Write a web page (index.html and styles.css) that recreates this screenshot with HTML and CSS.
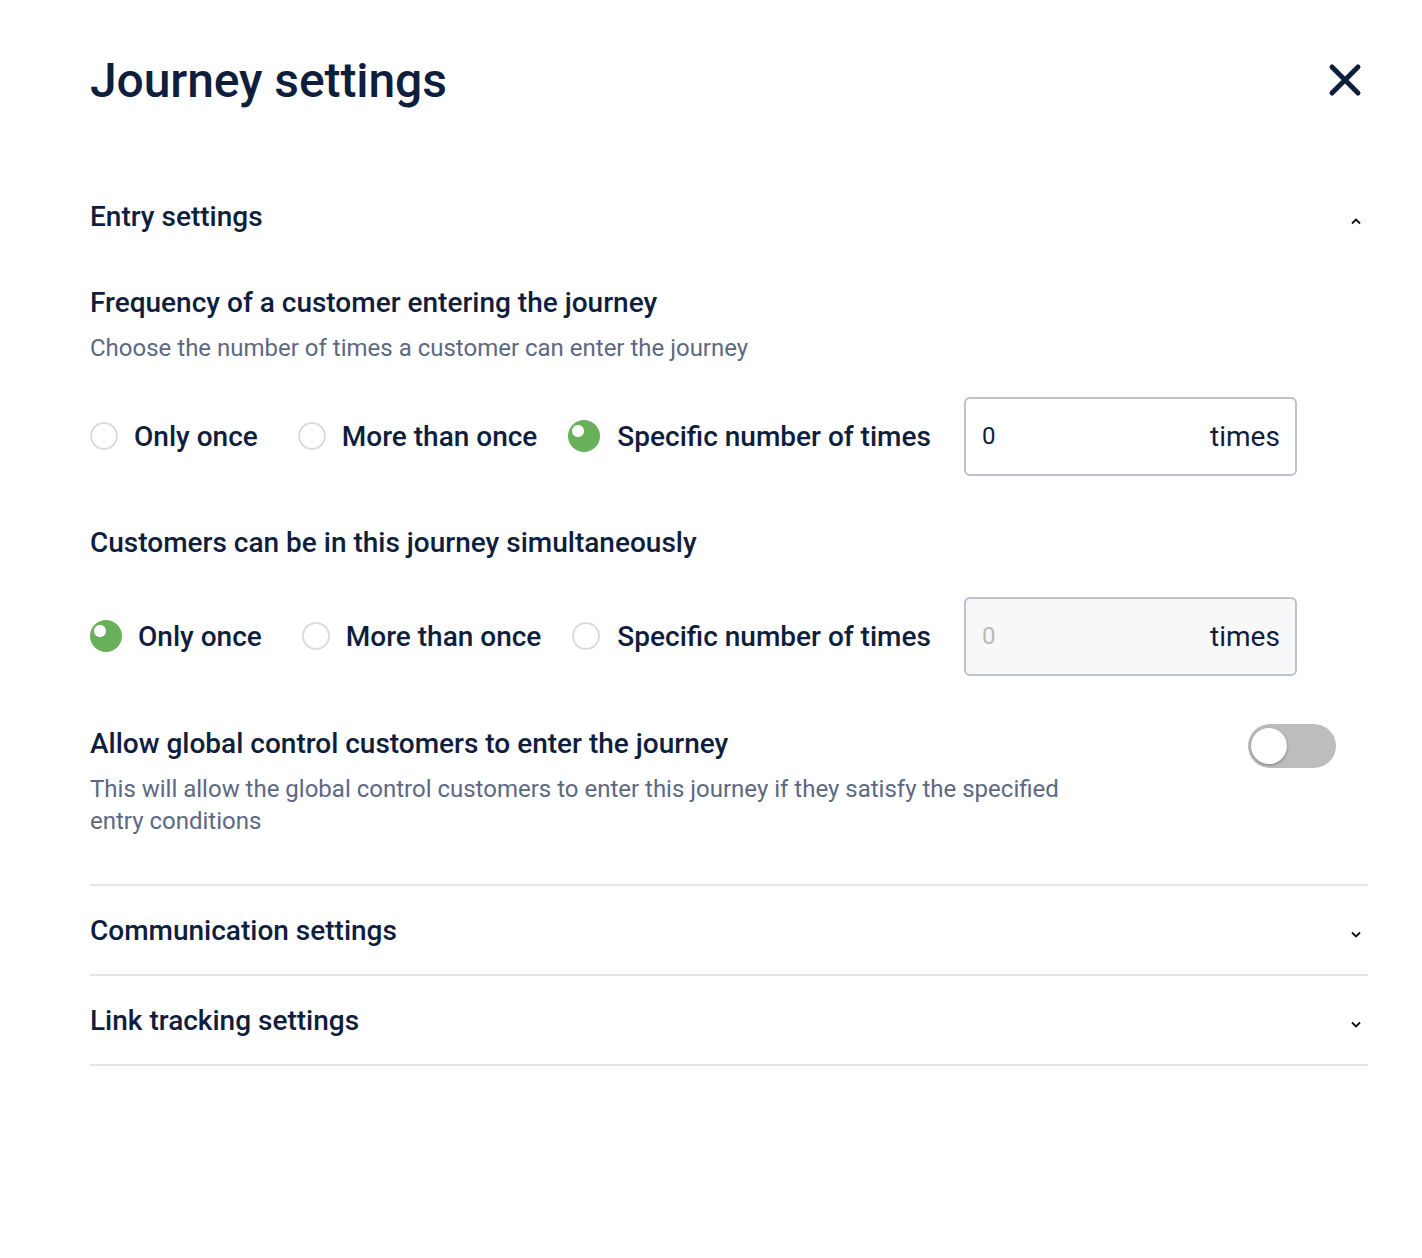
FILE: index.html
```html
<!DOCTYPE html>
<html lang="en">
<head>
  <meta charset="UTF-8" />
  <meta name="viewport" content="width=device-width, initial-scale=1.0"/>
  <title>Journey settings</title>
  <link rel="stylesheet" href="styles.css">
</head>
<body>

  <div class="panel">
    <header class="panel-head">
      <h1>Journey settings</h1>
      <button class="close-btn" aria-label="Close">
        <svg width="34" height="34" viewBox="0 0 34 34"><path d="M4 4 L30 30 M30 4 L4 30" stroke="#0f1e3d" stroke-width="5" stroke-linecap="round"/></svg>
      </button>
    </header>

    <section class="acc open">
      <div class="acc-head">
        <h2>Entry settings</h2>
        <svg class="chev" width="12" height="8" viewBox="0 0 12 8"><path d="M2 6.5 L6 2.5 L10 6.5" fill="none" stroke="#111" stroke-width="1.8"/></svg>
      </div>

      <h3 class="q q-first">Frequency of a customer entering the journey</h3>
      <p class="hint">Choose the number of times a customer can enter the journey</p>

      <div class="options">
        <label class="opt"><span class="radio"></span>Only once</label>
        <label class="opt"><span class="radio"></span>More than once</label>
        <label class="opt"><span class="radio on"></span>Specific number of times</label>
        <div class="count">
          <span class="num">0</span>
          <span class="unit">times</span>
        </div>
      </div>

      <h3 class="q q-second">Customers can be in this journey simultaneously</h3>

      <div class="options options-2">
        <label class="opt"><span class="radio on"></span>Only once</label>
        <label class="opt"><span class="radio"></span>More than once</label>
        <label class="opt"><span class="radio"></span>Specific number of times</label>
        <div class="count disabled">
          <span class="num">0</span>
          <span class="unit">times</span>
        </div>
      </div>

      <div class="toggle-row">
        <div>
          <h3 class="q">Allow global control customers to enter the journey</h3>
          <p class="hint wide">This will allow the global control customers to enter this journey if they satisfy the specified entry conditions</p>
        </div>
        <span class="switch"><span class="knob"></span></span>
      </div>
    </section>

    <section class="acc">
      <div class="acc-head">
        <h2>Communication settings</h2>
        <svg class="chev" width="12" height="8" viewBox="0 0 12 8"><path d="M2 1.5 L6 5.5 L10 1.5" fill="none" stroke="#111" stroke-width="1.8"/></svg>
      </div>
    </section>

    <section class="acc last">
      <div class="acc-head">
        <h2>Link tracking settings</h2>
        <svg class="chev" width="12" height="8" viewBox="0 0 12 8"><path d="M2 1.5 L6 5.5 L10 1.5" fill="none" stroke="#111" stroke-width="1.8"/></svg>
      </div>
    </section>
  </div>

</body>
</html>
```

FILE: styles.css
```css
body {
  margin: 0;
  background: #fff;
  font-family: Roboto, "Liberation Sans", sans-serif;
  color: #0f1e3d;
}

.panel {
  padding: 50px 54px 0 90px;
}

.panel-head {
  display: flex;
  justify-content: space-between;
  align-items: center;
  height: 60px;
}

.panel-head h1 {
  margin: 0;
  font-size: 48px;
  font-weight: 500;
  letter-spacing: -0.1px;
}

.close-btn {
  background: none;
  border: none;
  padding: 0;
  margin-right: 6px;
  cursor: pointer;
  display: flex;
}

.acc-head {
  display: flex;
  justify-content: space-between;
  align-items: center;
  height: 40px;
}

.acc-head h2 {
  margin: 0;
  font-size: 28px;
  font-weight: 500;
}

.chev {
  margin-right: 6px;
  margin-top: 10px;
}

.acc.open {
  margin-top: 86px;
  padding-bottom: 47px;
  border-bottom: 2px solid #e3e5ea;
}

.acc:not(.open) {
  border-bottom: 2px solid #e3e5ea;
}

.acc:not(.open) .acc-head {
  height: 88px;
}

.q {
  margin: 0;
  font-size: 28px;
  font-weight: 500;
  line-height: 32px;
}

.q-first {
  margin-top: 51px;
}

.q-second {
  margin-top: 52px;
}

.hint {
  margin: 13px 0 0;
  font-size: 24px;
  line-height: 32px;
  color: #5d6882;
}

.hint.wide {
  max-width: 990px;
}

.options {
  display: flex;
  align-items: center;
  margin-top: 33px;
  height: 78px;
}

.options-2 {
  margin-top: 38px;
}

.opt {
  display: flex;
  align-items: center;
  font-size: 28px;
  font-weight: 500;
}

.opt:nth-child(1) {
  margin-right: 40px;
}

.opt:nth-child(2) {
  margin-right: 31px;
}

.opt:nth-child(3) {
  margin-right: 33px;
}

.radio {
  width: 24px;
  height: 24px;
  border: 2px solid #dcdcdc;
  border-radius: 50%;
  margin-right: 16px;
  flex: none;
}

.radio.on {
  width: 32px;
  height: 32px;
  border: none;
  background: radial-gradient(circle at 10px 11px, #fff 0, #fff 5.5px, #69b05a 6.5px);
}

.opt:nth-child(3) .radio {
  margin-right: 17px;
}

.count {
  display: flex;
  justify-content: space-between;
  align-items: center;
  box-sizing: border-box;
  width: 333px;
  height: 79px;
  border: 2px solid #bcc2ce;
  border-radius: 6px;
  padding: 0 15px 0 16px;
  font-size: 28px;
}

.count .num {
  font-size: 24px;
}

.count.disabled {
  background: #f8f8f8;
}

.count.disabled .num {
  color: #b9b9b9;
}

.toggle-row {
  display: flex;
  justify-content: space-between;
  align-items: flex-start;
  margin-top: 53px;
}

.switch {
  width: 88px;
  height: 44px;
  border-radius: 22px;
  background: #bdbdbd;
  margin-top: -4px;
  margin-right: 32px;
  position: relative;
  flex: none;
}

.knob {
  position: absolute;
  left: 3px;
  top: 4px;
  width: 36px;
  height: 36px;
  border-radius: 50%;
  background: #fff;
  box-shadow: 0 1px 3px rgba(0,0,0,0.35);
}
```
